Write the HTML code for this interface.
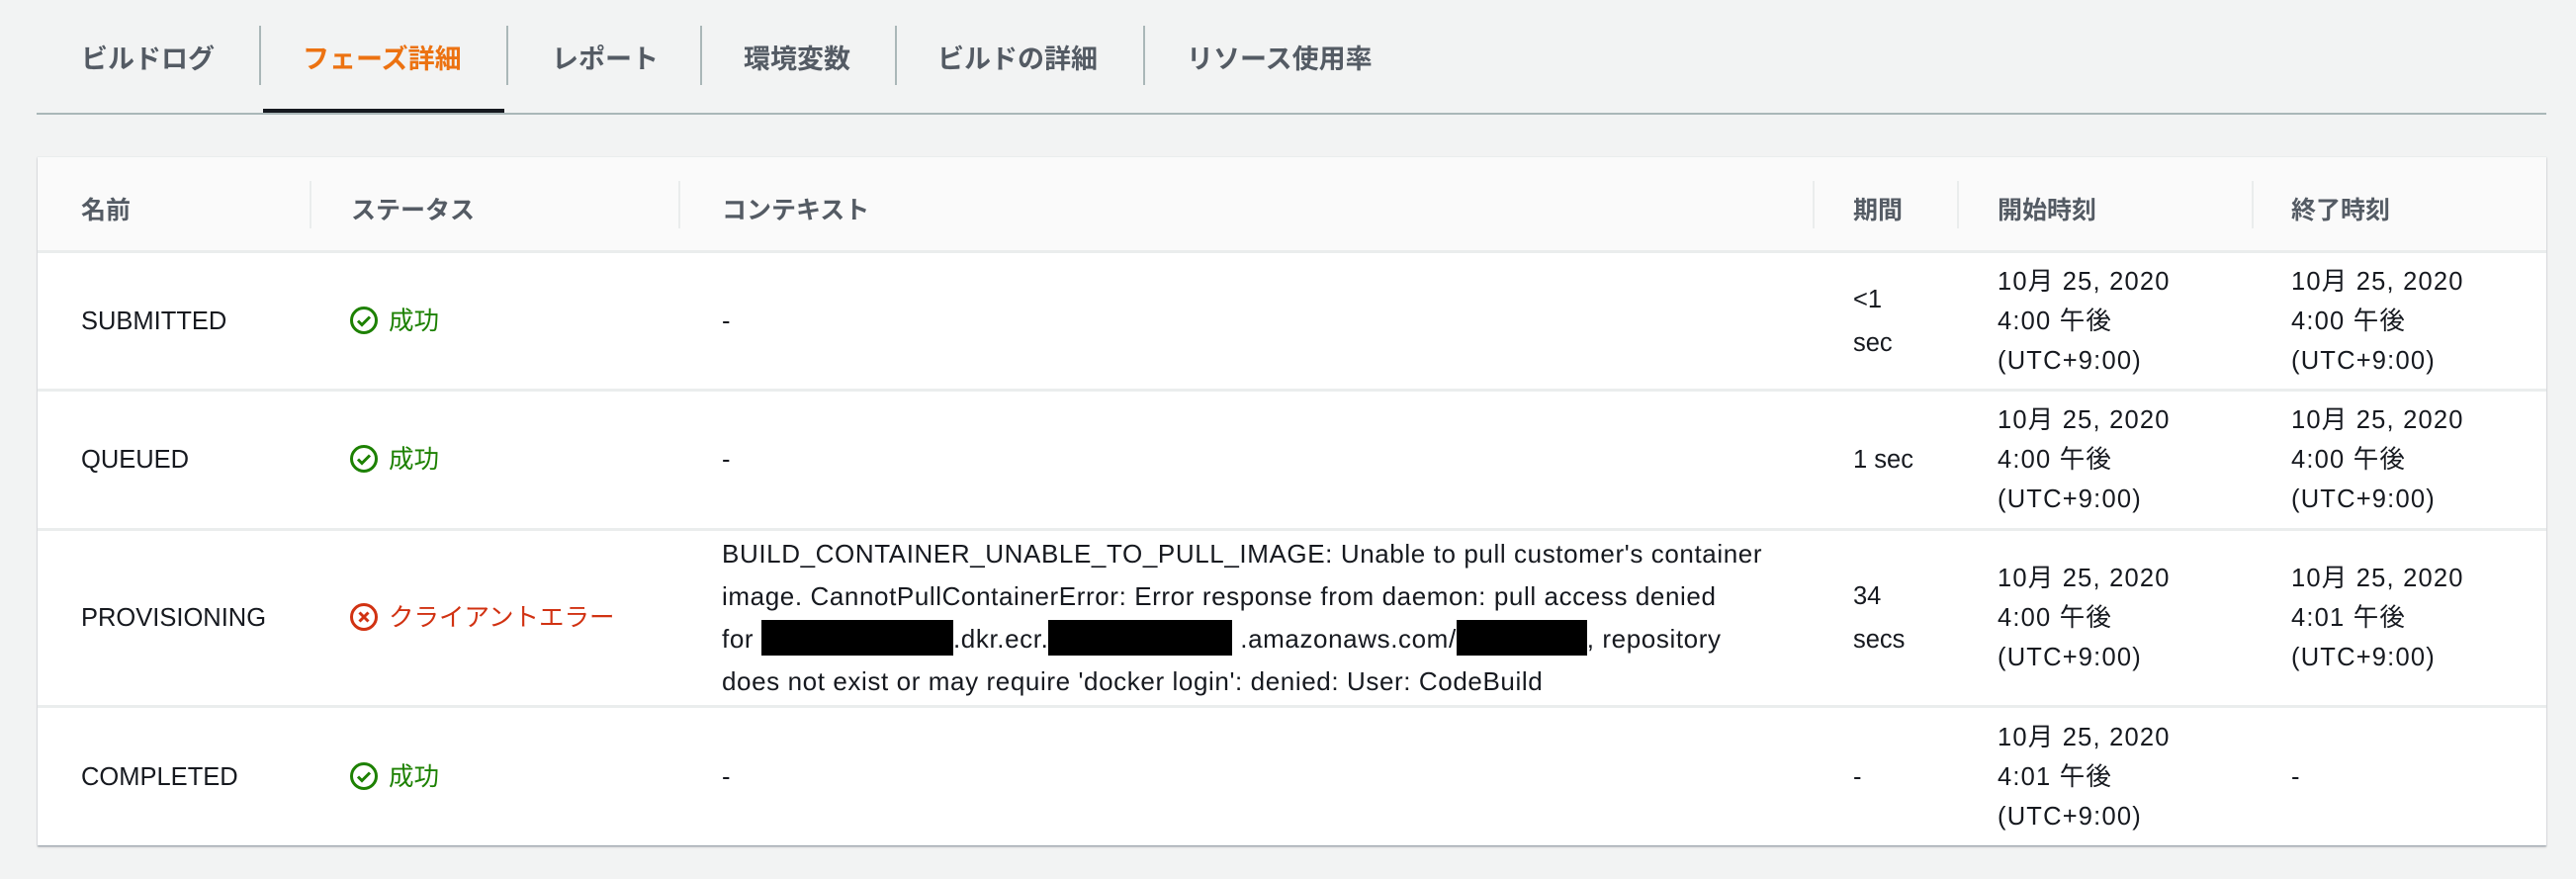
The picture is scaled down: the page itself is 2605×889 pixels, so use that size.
<!DOCTYPE html>
<html><head><meta charset="utf-8">
<style>
*{margin:0;padding:0;box-sizing:border-box}
body{width:2605px;height:889px;background:#f2f3f3;font-family:"Liberation Sans","Noto Sans CJK JP",sans-serif;color:#16191f;position:relative;overflow:hidden}
.tab{position:absolute;top:38px;font-size:27px;font-weight:bold;color:#545b64;white-space:nowrap}
.sep{position:absolute;top:26px;width:2px;height:60px;background:#aab7b8}
.card{position:absolute;left:38px;top:158px;width:2537px;height:697px;background:#fff;box-shadow:0 1px 1px rgba(0,31,63,.3),0 2px 2px rgba(0,0,0,.15);border-top:1px solid #eaeded}
.head{position:absolute;left:0;top:0;width:100%;height:97px;background:#fafafa;border-bottom:3px solid #eaeded}
.h{position:absolute;top:34px;font-size:25px;font-weight:bold;color:#545b64;white-space:nowrap}
.hs{position:absolute;top:24px;width:2px;height:48px;background:#eaeded}
.row{position:absolute;left:0;width:100%;border-bottom:3px solid #eaeded}
.c{position:absolute;top:50%;transform:translateY(-50%);font-size:25.5px;line-height:40px;white-space:nowrap}
.d{letter-spacing:1.2px}
.ok{color:#1d8102}.err{color:#d13212}
.ic{display:inline-block;vertical-align:middle;margin-right:10px;margin-top:-4px}
.bx{display:inline-block;background:#000;height:36px;vertical-align:middle;margin-top:-6px}
</style></head><body>
<div class="tab" style="left:82px">ビルドログ</div>
<div class="sep" style="left:262px"></div>
<div class="tab" style="left:306px;color:#ec7211">フェーズ詳細</div>
<div class="sep" style="left:512px"></div>
<div class="tab" style="left:558px">レポート</div>
<div class="sep" style="left:708px"></div>
<div class="tab" style="left:752px">環境変数</div>
<div class="sep" style="left:905px"></div>
<div class="tab" style="left:948px">ビルドの詳細</div>
<div class="sep" style="left:1156px"></div>
<div class="tab" style="left:1200px">リソース使用率</div>
<div style="position:absolute;left:37px;top:114px;width:2538px;height:2px;background:#aab7b8"></div>
<div style="position:absolute;left:266px;top:110px;width:244px;height:4px;background:#16191f"></div>

<div class="card">
 <div class="head">
  <div class="h" style="left:44px">名前</div>
  <div class="hs" style="left:275px"></div>
  <div class="h" style="left:317px">ステータス</div>
  <div class="hs" style="left:648px"></div>
  <div class="h" style="left:692px">コンテキスト</div>
  <div class="hs" style="left:1795px"></div>
  <div class="h" style="left:1836px">期間</div>
  <div class="hs" style="left:1941px"></div>
  <div class="h" style="left:1982px">開始時刻</div>
  <div class="hs" style="left:2239px"></div>
  <div class="h" style="left:2279px">終了時刻</div>
 </div>

 <div class="row" style="top:97px;height:140px">
  <div class="c" style="left:44px">SUBMITTED</div>
  <div class="c ok" style="left:315px"><svg class="ic" width="30" height="30" viewBox="0 0 30 30"><circle cx="15" cy="15" r="12.5" fill="none" stroke="#1d8102" stroke-width="3"/><path d="M9 15.5l4 4 8-8" fill="none" stroke="#1d8102" stroke-width="3"/></svg>成功</div>
  <div class="c" style="left:692px">-</div>
  <div class="c" style="left:1836px;line-height:44px">&lt;1<br>sec</div>
  <div class="c d" style="left:1982px">10月 25, 2020<br>4:00 午後<br>(UTC+9:00)</div>
  <div class="c d" style="left:2279px">10月 25, 2020<br>4:00 午後<br>(UTC+9:00)</div>
 </div>

 <div class="row" style="top:237px;height:141px">
  <div class="c" style="left:44px">QUEUED</div>
  <div class="c ok" style="left:315px"><svg class="ic" width="30" height="30" viewBox="0 0 30 30"><circle cx="15" cy="15" r="12.5" fill="none" stroke="#1d8102" stroke-width="3"/><path d="M9 15.5l4 4 8-8" fill="none" stroke="#1d8102" stroke-width="3"/></svg>成功</div>
  <div class="c" style="left:692px">-</div>
  <div class="c" style="left:1836px">1 sec</div>
  <div class="c d" style="left:1982px">10月 25, 2020<br>4:00 午後<br>(UTC+9:00)</div>
  <div class="c d" style="left:2279px">10月 25, 2020<br>4:00 午後<br>(UTC+9:00)</div>
 </div>

 <div class="row" style="top:378px;height:179px">
  <div class="c" style="left:44px">PROVISIONING</div>
  <div class="c err" style="left:315px"><svg class="ic" width="30" height="30" viewBox="0 0 30 30"><circle cx="15" cy="15" r="12.5" fill="none" stroke="#d13212" stroke-width="3"/><path d="M10.5 10.5l9 9M19.5 10.5l-9 9" fill="none" stroke="#d13212" stroke-width="3"/></svg>クライアントエラー</div>
  <div class="c" style="left:692px;font-size:26px;letter-spacing:0.6px;line-height:43px">BUILD_CONTAINER_UNABLE_TO_PULL_IMAGE: Unable to pull customer's container<br>image. CannotPullContainerError: Error response from daemon: pull access denied<br>for <span class="bx" style="width:194px"></span>.dkr.ecr.<span class="bx" style="width:186px"></span> .amazonaws.com/<span class="bx" style="width:132px"></span>, repository<br>does not exist or may require 'docker login': denied: User: CodeBuild</div>
  <div class="c" style="left:1836px;line-height:44px">34<br>secs</div>
  <div class="c d" style="left:1982px">10月 25, 2020<br>4:00 午後<br>(UTC+9:00)</div>
  <div class="c d" style="left:2279px">10月 25, 2020<br>4:01 午後<br>(UTC+9:00)</div>
 </div>

 <div class="row" style="top:557px;height:140px;border-bottom:none">
  <div class="c" style="left:44px">COMPLETED</div>
  <div class="c ok" style="left:315px"><svg class="ic" width="30" height="30" viewBox="0 0 30 30"><circle cx="15" cy="15" r="12.5" fill="none" stroke="#1d8102" stroke-width="3"/><path d="M9 15.5l4 4 8-8" fill="none" stroke="#1d8102" stroke-width="3"/></svg>成功</div>
  <div class="c" style="left:692px">-</div>
  <div class="c" style="left:1836px">-</div>
  <div class="c d" style="left:1982px">10月 25, 2020<br>4:01 午後<br>(UTC+9:00)</div>
  <div class="c" style="left:2279px">-</div>
 </div>
</div>
</body></html>
